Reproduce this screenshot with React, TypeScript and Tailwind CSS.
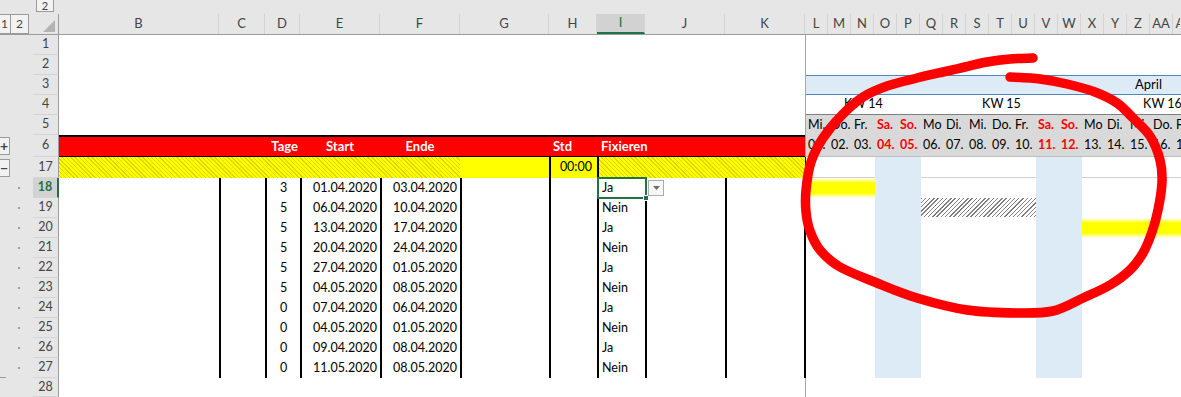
import React from "react";

type Bar = { from: number; len: number; kind: "yellow" | "hatch" };
type DataRow = { n: number; tage: string; start: string; ende: string; fix: string; bar?: Bar };

const LEFT_COLS = [
  { k: "B", w: "w-[160px]" },
  { k: "C", w: "w-[46px]" },
  { k: "D", w: "w-[35px]" },
  { k: "E", w: "w-[80px]" },
  { k: "F", w: "w-[80px]" },
  { k: "G", w: "w-[89px]" },
  { k: "H", w: "w-[48px]" },
  { k: "I", w: "w-[48px]" },
  { k: "J", w: "w-[80px]" },
  { k: "K", w: "w-[80px]" },
];

const GANTT_COLS = ["L", "M", "N", "O", "P", "Q", "R", "S", "T", "U", "V", "W", "X", "Y", "Z", "AA", "AB"];

const DAYS = [
  ["Mi.", "01."], ["Do.", "02."], ["Fr.", "03."], ["Sa.", "04."], ["So.", "05."],
  ["Mo", "06."], ["Di.", "07."], ["Mi.", "08."], ["Do.", "09."], ["Fr.", "10."],
  ["Sa.", "11."], ["So.", "12."], ["Mo", "13."], ["Di.", "14."], ["Mi.", "15."],
  ["Do.", "16."], ["Fr.", "17."],
];

const WEEKEND = [3, 4, 10, 11];

const DATA: DataRow[] = [
  { n: 18, tage: "3", start: "01.04.2020", ende: "03.04.2020", fix: "Ja", bar: { from: 0, len: 3, kind: "yellow" } },
  { n: 19, tage: "5", start: "06.04.2020", ende: "10.04.2020", fix: "Nein", bar: { from: 5, len: 5, kind: "hatch" } },
  { n: 20, tage: "5", start: "13.04.2020", ende: "17.04.2020", fix: "Ja", bar: { from: 12, len: 5, kind: "yellow" } },
  { n: 21, tage: "5", start: "20.04.2020", ende: "24.04.2020", fix: "Nein" },
  { n: 22, tage: "5", start: "27.04.2020", ende: "01.05.2020", fix: "Ja" },
  { n: 23, tage: "5", start: "04.05.2020", ende: "08.05.2020", fix: "Nein" },
  { n: 24, tage: "0", start: "07.04.2020", ende: "06.04.2020", fix: "Ja" },
  { n: 25, tage: "0", start: "04.05.2020", ende: "01.05.2020", fix: "Nein" },
  { n: 26, tage: "0", start: "09.04.2020", ende: "08.04.2020", fix: "Ja" },
  { n: 27, tage: "0", start: "11.05.2020", ende: "08.05.2020", fix: "Nein" },
];

const BAR_W: Record<number, string> = { 3: "w-[69px]", 5: "w-[115px]" };

const YELLOW_HATCH = "bg-[repeating-linear-gradient(45deg,#e2d600_0_1px,#ffff00_1px_3px)] bg-fixed";

// hand drawn marker stroke, traced from the screenshot
const CIRCLE_PTS = [
  [1033, 58], [1010, 59], [987, 62], [965, 67], [943, 72], [917, 78], [887, 86], [863, 97],
  [842, 115], [823, 138], [811, 162], [806, 190], [806, 212], [810, 231], [820, 250], [840, 267],
  [877, 283], [917, 298], [967, 310], [1017, 313], [1053, 311], [1083, 298], [1110, 285],
  [1130, 270], [1143, 253], [1152, 232], [1158, 210], [1162, 182], [1160, 160], [1150, 136],
  [1133, 118], [1117, 103], [1095, 92], [1067, 84], [1040, 79], [1010, 77],
];

function smoothPath(pts: number[][]) {
  let d = `M${pts[0][0]},${pts[0][1]}`;
  for (let i = 0; i < pts.length - 1; i++) {
    const p0 = pts[i - 1] || pts[i];
    const p1 = pts[i];
    const p2 = pts[i + 1];
    const p3 = pts[i + 2] || p2;
    const c1x = p1[0] + (p2[0] - p0[0]) / 6;
    const c1y = p1[1] + (p2[1] - p0[1]) / 6;
    const c2x = p2[0] - (p3[0] - p1[0]) / 6;
    const c2y = p2[1] - (p3[1] - p1[1]) / 6;
    d += ` C${c1x.toFixed(1)},${c1y.toFixed(1)} ${c2x.toFixed(1)},${c2y.toFixed(1)} ${p2[0]},${p2[1]}`;
  }
  return d;
}

const CIRCLE_D = smoothPath(CIRCLE_PTS);

const Gutter = ({ kind }: { kind?: "plus" | "minus" | "dot" | "end" }) => (
  <div className="w-[33px] shrink-0 h-full flex items-center relative">
    {(kind === "plus" || kind === "minus") && (
      <div className="-ml-[7px] w-[17px] h-[18px] border border-[#9b9b9b] bg-[#f2f2f2] flex items-center pl-[6px] text-[14px] leading-none font-bold text-[#444]">
        {kind === "plus" ? "+" : "−"}
      </div>
    )}
    {(kind === "dot" || kind === "end") && <div className="ml-[18px] w-[2px] h-[2px] bg-[#a0a0a0]" />}
    {kind === "end" && <div className="absolute left-0 bottom-0 w-[6px] h-px bg-[#9b9b9b]" />}
  </div>
);

const RowHead = ({ n, active }: { n: number; active?: boolean }) => (
  <div
    className={`w-[26px] shrink-0 h-full flex items-center justify-center text-[12.5px] border-b border-b-[#d4d4d4] ${
      active
        ? "bg-[#d2d2d2] text-[#217346] font-bold border-r-2 border-r-[#217346]"
        : "text-[#444] border-r border-r-[#9b9b9b]"
    }`}
  >
    {n}
  </div>
);

const Freeze = ({ dark }: { dark?: boolean }) => (
  <div className={`w-px shrink-0 h-full ${dark ? "bg-black" : "bg-[#a6a6a6]"}`} />
);

const GanttCells = ({ bar, shade, line }: { bar?: Bar; shade?: boolean; line?: boolean }) => {
  const out: React.ReactNode[] = [];
  let i = 0;
  while (i < GANTT_COLS.length) {
    if (bar && i === bar.from) {
      out.push(
        <div
          key={i}
          className={`${BAR_W[bar.len]} shrink-0 ${
            bar.kind === "yellow"
              ? "h-full bg-[linear-gradient(to_bottom,#ffffff_0%,#ffff00_25%,#ffff00_75%,#ffffff_100%)]"
              : "h-[19px] bg-[repeating-linear-gradient(135deg,#808080_0_1px,#ffffff_1px_3px)]"
          }`}
        />
      );
      i += bar.len;
      continue;
    }
    const we = shade && WEEKEND.includes(i);
    out.push(
      <div
        key={i}
        className={`w-[23px] shrink-0 h-full ${we ? "bg-[#ddebf7]" : line ? "border-b border-[#cfcfcf]" : ""}`}
      />
    );
    i++;
  }
  return <div className="w-[375px] h-full flex overflow-hidden">{out}</div>;
};

export default function App() {
  return (
    <div className="relative w-[1181px] h-[397px] overflow-hidden bg-white text-black font-[family-name:Lato,'Liberation_Sans',sans-serif]">
      {/* column outline strip */}
      <div className="h-[14px] bg-[#e6e6e6] flex">
        <div className="ml-[36px] w-[18px] h-[12px] border border-t-0 border-[#9b9b9b] bg-[#f2f2f2] flex items-center justify-center text-[11px] leading-none text-[#444]">
          2
        </div>
      </div>

      {/* column headers */}
      <div className="h-[21px] flex bg-[#e6e6e6] border-b border-[#9b9b9b]">
        <div className="w-[33px] shrink-0 flex">
          <div className="-ml-[8px] w-[19px] h-[20px] border border-[#9b9b9b] bg-[#f2f2f2] flex items-center justify-center text-[12px] text-[#444]">
            <span className="ml-[6px]">1</span>
          </div>
          <div className="w-[18px] h-[20px] border border-l-0 border-[#9b9b9b] bg-[#f2f2f2] flex items-center justify-center text-[12px] text-[#444]">
            2
          </div>
        </div>
        <div className="w-[26px] shrink-0 border-r border-[#9b9b9b] flex items-end justify-end pr-[3px] pb-[2px]">
          <svg width="12" height="12" viewBox="0 0 12 12">
            <polygon points="12,0 12,12 0,12" fill="#b4b4b4" />
          </svg>
        </div>
        {LEFT_COLS.map((c) => (
          <div
            key={c.k}
            className={`${c.w} shrink-0 flex items-center justify-center text-[13px] border-r border-[#d4d4d4] ${
              c.k === "I" ? "bg-[#d2d2d2] text-[#217346] border-b-2 border-b-[#217346]" : "text-[#444]"
            }`}
          >
            {c.k}
          </div>
        ))}
        <div className="w-[375px] flex overflow-hidden">
          {GANTT_COLS.map((c) => (
            <div key={c} className="w-[23px] shrink-0 flex items-center justify-center text-[13px] text-[#444] border-r border-[#d4d4d4]">
              {c}
            </div>
          ))}
        </div>
      </div>

      {/* rows 1 - 5 */}
      {[1, 2, 3, 4, 5].map((n) => (
        <div key={n} className="h-[20px] flex">
          <div className="w-[33px] shrink-0 bg-[#e6e6e6]" />
          <div className="bg-[#e6e6e6] h-full">
            <RowHead n={n} />
          </div>
          <div className="w-[746px] shrink-0" />
          <Freeze />
          {n === 3 && (
            <div className="w-[375px] h-full bg-[#ddebf7] border-y border-[#4f86bf] text-[13px] flex items-center">
              <span className="ml-[329px]">April</span>
            </div>
          )}
          {n === 4 && (
            <div className="w-[375px] h-full flex overflow-hidden border-b border-[#7f7f7f] text-[12.5px]">
              <div className="w-[115px] shrink-0 flex items-center justify-center">KW 14</div>
              <div className="w-[161px] shrink-0 flex items-center justify-center">KW 15</div>
              <div className="w-[161px] shrink-0 flex items-center justify-center">KW 16</div>
            </div>
          )}
          {n === 5 && (
            <div className="w-[375px] h-full flex overflow-hidden bg-[#d9d9d9] text-[12.5px]">
              {DAYS.map((d, i) => (
                <div
                  key={i}
                  className={`w-[23px] shrink-0 overflow-hidden whitespace-nowrap pl-[2px] flex items-center ${
                    WEEKEND.includes(i) ? "text-[#ff0000] font-bold" : ""
                  }`}
                >
                  {d[0]}
                </div>
              ))}
            </div>
          )}
        </div>
      ))}

      {/* row 6 - table header */}
      <div className="h-[22px] flex">
        <div className="bg-[#e6e6e6] h-full flex">
          <Gutter kind="plus" />
          <RowHead n={6} />
        </div>
        <div className="w-[746px] shrink-0 flex bg-[#ff0000] border-t-2 border-b border-black text-white font-bold text-[13px] whitespace-nowrap">
          <div className="w-[160px] shrink-0" />
          <div className="w-[46px] shrink-0" />
          <div className="w-[35px] shrink-0 flex items-center justify-end pr-[2px]">Tage</div>
          <div className="w-[80px] shrink-0 flex items-center justify-center">Start</div>
          <div className="w-[80px] shrink-0 flex items-center justify-center">Ende</div>
          <div className="w-[89px] shrink-0" />
          <div className="w-[48px] shrink-0 flex items-center pl-[4px]">Std</div>
          <div className="w-[48px] shrink-0 flex items-center pl-[4px] overflow-visible">Fixieren</div>
          <div className="w-[80px] shrink-0" />
          <div className="w-[80px] shrink-0" />
        </div>
        <Freeze />
        <div className="w-[375px] h-full flex overflow-hidden bg-[#d9d9d9] border-b border-[#bfbfbf] text-[12.5px]">
          {DAYS.map((d, i) => (
            <div
              key={i}
              className={`w-[23px] shrink-0 overflow-hidden whitespace-nowrap pl-[2px] flex items-center ${
                WEEKEND.includes(i) ? "text-[#ff0000] font-bold" : ""
              }`}
            >
              {d[1]}
            </div>
          ))}
        </div>
      </div>

      {/* row 17 - summary */}
      <div className="h-[21px] flex">
        <div className="bg-[#e6e6e6] h-full flex">
          <Gutter kind="minus" />
          <RowHead n={17} />
        </div>
        <div className="w-[746px] shrink-0 flex text-[12.5px]">
          <div className={`w-[160px] shrink-0 ${YELLOW_HATCH}`} />
          <div className={`w-[46px] shrink-0 ${YELLOW_HATCH}`} />
          <div className={`w-[35px] shrink-0 ${YELLOW_HATCH}`} />
          <div className={`w-[80px] shrink-0 ${YELLOW_HATCH}`} />
          <div className={`w-[80px] shrink-0 ${YELLOW_HATCH}`} />
          <div className="w-[89px] shrink-0 bg-[#ffff00]" />
          <div className="w-[48px] shrink-0 bg-[#ffff00] border-l-2 border-black flex items-center justify-end pr-[5px]">00:00</div>
          <div className={`w-[48px] shrink-0 border-l-2 border-black ${YELLOW_HATCH}`} />
          <div className={`w-[80px] shrink-0 ${YELLOW_HATCH}`} />
          <div className={`w-[80px] shrink-0 ${YELLOW_HATCH}`} />
        </div>
        <Freeze dark />
        <GanttCells shade line />
      </div>

      {/* rows 18 - 27 */}
      {DATA.map((r) => (
        <div key={r.n} className="h-[20px] flex">
          <div className="bg-[#e6e6e6] h-full flex">
            <Gutter kind={r.n === 27 ? "end" : "dot"} />
            <RowHead n={r.n} active={r.n === 18} />
          </div>
          <div className="w-[746px] shrink-0 flex text-[12.5px]">
            <div className="w-[160px] shrink-0" />
            <div className="w-[46px] shrink-0 border-l-2 border-black" />
            <div className="w-[35px] shrink-0 border-l-2 border-black flex items-center justify-center">{r.tage}</div>
            <div className="w-[80px] shrink-0 border-l-2 border-black flex items-center justify-end pr-[3px]">{r.start}</div>
            <div className="w-[80px] shrink-0 border-l-2 border-black flex items-center justify-end pr-[3px]">{r.ende}</div>
            <div className="w-[89px] shrink-0 border-l-2 border-black" />
            <div className="w-[48px] shrink-0 border-l-2 border-black" />
            <div className="w-[48px] shrink-0 border-l-2 border-black flex items-center pl-[3px]">{r.fix}</div>
            <div className="w-[80px] shrink-0 border-l-2 border-black" />
            <div className="w-[80px] shrink-0 border-l-2 border-r border-black" />
          </div>
          <Freeze dark />
          <GanttCells bar={r.bar} shade />
        </div>
      ))}

      {/* row 28 */}
      <div className="h-[19px] flex">
        <div className="bg-[#e6e6e6] h-full flex">
          <Gutter />
          <RowHead n={28} />
        </div>
        <div className="w-[746px] shrink-0" />
        <Freeze />
        <div className="w-[375px]" />
      </div>

      {/* active cell I18 with its list arrow */}
      <div className="absolute left-[597px] top-[177px] w-[50px] h-[22px] border-2 border-[#217346]">
        <div className="absolute -right-[4px] -bottom-[4px] w-[6px] h-[6px] bg-[#217346] border border-white" />
      </div>
      <div className="absolute left-[648px] top-[180px] w-[16px] h-[16px] border border-[#ababab] bg-[#f7f7f7] flex items-center justify-center">
        <svg width="7" height="4" viewBox="0 0 7 4">
          <polygon points="0,0 7,0 3.5,4" fill="#6b6b6b" />
        </svg>
      </div>

      {/* red marker circle */}
      <svg className="absolute left-0 top-0 pointer-events-none" width="1181" height="397" viewBox="0 0 1181 397">
        <path d={CIRCLE_D} fill="none" stroke="#ff0000" strokeWidth="9.5" strokeLinecap="round" strokeLinejoin="round" />
      </svg>
    </div>
  );
}
